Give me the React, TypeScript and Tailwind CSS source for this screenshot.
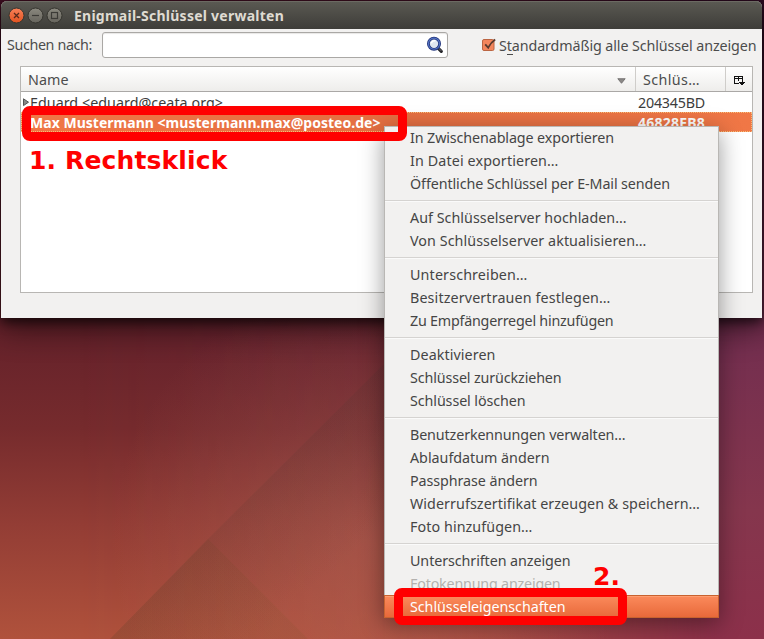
import { useLayoutEffect, useRef } from 'react';

// Single-line label whose tracking is adjusted so that it fills `width` pixels.
function Label({ text, width, className = '' }: { text: string; width: number; className?: string }) {
  const ref = useRef<HTMLSpanElement>(null);
  useLayoutEffect(() => {
    const el = ref.current;
    if (!el) return;
    el.style.letterSpacing = '0px';
    const natural = el.getBoundingClientRect().width;
    el.style.letterSpacing = `${(width - natural) / text.length}px`;
  }, [text, width]);
  return (
    <span ref={ref} className={`inline-block shrink-0 whitespace-pre ${className}`}>
      {text}
    </span>
  );
}

type Item = { text: string; width: number; state?: 'disabled' | 'active' };

const groups: Item[][] = [
  [
    { text: 'In Zwischenablage exportieren', width: 204 },
    { text: 'In Datei exportieren…', width: 148.5 },
    { text: 'Öffentliche Schlüssel per E-Mail senden', width: 260 },
  ],
  [
    { text: 'Auf Schlüsselserver hochladen…', width: 216.5 },
    { text: 'Von Schlüsselserver aktualisieren…', width: 236.5 },
  ],
  [
    { text: 'Unterschreiben…', width: 117.5 },
    { text: 'Besitzervertrauen festlegen…', width: 200.5 },
    { text: 'Zu Empfängerregel hinzufügen', width: 203.5 },
  ],
  [
    { text: 'Deaktivieren', width: 85.5 },
    { text: 'Schlüssel zurückziehen', width: 151.5 },
    { text: 'Schlüssel löschen', width: 115.5 },
  ],
  [
    { text: 'Benutzerkennungen verwalten…', width: 215.5 },
    { text: 'Ablaufdatum ändern', width: 139.5 },
    { text: 'Passphrase ändern', width: 127.5 },
    { text: 'Widerrufszertifikat erzeugen & speichern…', width: 290 },
    { text: 'Foto hinzufügen…', width: 122.5 },
  ],
  [
    { text: 'Unterschriften anzeigen', width: 160.5 },
    { text: 'Fotokennung anzeigen', width: 150.5, state: 'disabled' },
    { text: 'Schlüsseleigenschaften', width: 155.5, state: 'active' },
  ],
];

function MenuRow({ item }: { item: Item }) {
  const tone =
    item.state === 'active'
      ? 'border border-[#c8622f] bg-linear-to-b from-[#fb8a5b] to-[#e8693a] text-white shadow-[inset_0_1px_0_#ff9d70] -mx-px pl-[25px]'
      : item.state === 'disabled'
        ? 'pl-[25px] text-[#b3b1ae]'
        : 'pl-[25px] text-[#454545]';
  return (
    <div className={`flex h-[23px] items-center ${tone}`}>
      <Label text={item.text} width={item.width} />
    </div>
  );
}

function ContextMenu() {
  return (
    <div className="absolute left-[384px] top-[126px] w-[335px] border-x border-[#b9b7b4] bg-[#f2f1f0] shadow-[0_6px_22px_rgba(0,0,0,0.4)]">
      <div className="absolute inset-x-0 top-0 h-px bg-[#b9b7b4]" />
      {groups.map((items, i) => (
        <div key={i}>
          {i > 0 && (
            <div className="flex h-[11px] flex-col pt-[5px]">
              <div className="h-px bg-[#d5d3d1]" />
              <div className="h-px bg-[#fafafa]" />
            </div>
          )}
          {items.map((item) => (
            <MenuRow key={item.text} item={item} />
          ))}
        </div>
      ))}
    </div>
  );
}

function Wallpaper() {
  return (
    <svg className="absolute inset-0" width="764" height="639" viewBox="0 0 764 639">
      <defs>
        <linearGradient id="base" x1="0" y1="0" x2="0" y2="639" gradientUnits="userSpaceOnUse">
          <stop offset="0" stopColor="#3d0e20" />
          <stop offset="0.49" stopColor="#62202a" />
          <stop offset="0.67" stopColor="#762b2d" />
          <stop offset="0.82" stopColor="#933d35" />
          <stop offset="1" stopColor="#b0523c" />
        </linearGradient>
        <linearGradient id="violet" x1="0" y1="0" x2="0" y2="639" gradientUnits="userSpaceOnUse">
          <stop offset="0" stopColor="#2c0a20" />
          <stop offset="0.55" stopColor="#752f4f" />
          <stop offset="0.8" stopColor="#85364d" />
          <stop offset="1" stopColor="#8c304a" />
        </linearGradient>
        <linearGradient id="fade" x1="0" x2="764" y1="0" y2="0" gradientUnits="userSpaceOnUse">
          <stop offset="0.1" stopColor="#fff" stopOpacity="0" />
          <stop offset="0.5" stopColor="#fff" stopOpacity="0.15" />
          <stop offset="0.65" stopColor="#fff" stopOpacity="0.32" />
          <stop offset="0.94" stopColor="#fff" stopOpacity="1" />
        </linearGradient>
        <radialGradient id="glow" cx="370" cy="540" r="260" gradientUnits="userSpaceOnUse">
          <stop offset="0" stopColor="#d08c70" stopOpacity="0.26" />
          <stop offset="1" stopColor="#d08c70" stopOpacity="0" />
        </radialGradient>
        <linearGradient id="facet" x1="200" y1="520" x2="280" y2="610" gradientUnits="userSpaceOnUse">
          <stop offset="0" stopColor="#5a4020" stopOpacity="0.12" />
          <stop offset="1" stopColor="#6a5020" stopOpacity="0.1" />
        </linearGradient>
        <linearGradient id="slope" x1="290" y1="450" x2="370" y2="540" gradientUnits="userSpaceOnUse">
          <stop offset="0" stopColor="#40342c" stopOpacity="0.12" />
          <stop offset="1" stopColor="#40342c" stopOpacity="0" />
        </linearGradient>
        <mask id="side">
          <rect width="764" height="639" fill="url(#fade)" />
        </mask>
      </defs>
      <rect width="764" height="639" fill="url(#base)" />
      <rect width="764" height="639" fill="url(#violet)" mask="url(#side)" />
      <rect width="764" height="639" fill="url(#glow)" />
      <path d="M400 348 L208 539 L110 639 H500 V348Z" fill="url(#slope)" />
      <path d="M208 539 L110 639 H308Z" fill="url(#facet)" />
    </svg>
  );
}

function TitleBar() {
  return (
    <div className="flex h-7 items-center rounded-t-[6px] bg-linear-to-b from-[#5b5a53] to-[#3e3d39] pl-[7px] shadow-[inset_0_1px_0_#6b6a62]">
      <svg width="56" height="20" viewBox="0 0 56 20" className="shrink-0">
        <defs>
          <linearGradient id="close" x1="0" y1="0" x2="0" y2="1">
            <stop offset="0" stopColor="#f78159" />
            <stop offset="1" stopColor="#e2521f" />
          </linearGradient>
          <linearGradient id="ctl" x1="0" y1="0" x2="0" y2="1">
            <stop offset="0" stopColor="#8b897f" />
            <stop offset="1" stopColor="#66645d" />
          </linearGradient>
        </defs>
        <circle cx="8.5" cy="10.5" r="7.5" fill="url(#close)" stroke="#36352f" />
        <circle cx="27.5" cy="10.5" r="7.5" fill="url(#ctl)" stroke="#36352f" />
        <circle cx="46.5" cy="10.5" r="7.5" fill="url(#ctl)" stroke="#36352f" />
        <path d="M6 8l5 5m0-5l-5 5" stroke="#57291a" strokeWidth="1.3" fill="none" />
        <path d="M24 10.5h7" stroke="#3c3b37" strokeWidth="1.2" />
        <rect x="43.5" y="7.5" width="6" height="6" fill="none" stroke="#3c3b37" strokeWidth="1.2" />
      </svg>
      <Label text="Enigmail-Schlüssel verwalten" width={210} className="ml-[10px] mt-px text-[14px] font-bold text-[#dfdbd2]" />
    </div>
  );
}

function SearchIcon() {
  return (
    <svg width="18" height="18" viewBox="0 0 18 18">
      <path d="M12.3 12.3l3 3" stroke="#26262a" strokeWidth="3.2" strokeLinecap="round" />
      <path d="M12.6 12.2l2.4 2.4" stroke="#77777c" strokeWidth="0.9" strokeLinecap="round" />
      <circle cx="8" cy="7.7" r="5.6" fill="#dfe6ef" stroke="#22357c" strokeWidth="2.8" />
      <circle cx="8" cy="7.7" r="5.6" fill="none" stroke="#5474c4" strokeWidth="1.1" />
      <path d="M5.4 7.4a3 3 0 0 1 4-2.5" stroke="#fff" strokeWidth="1.6" fill="none" />
    </svg>
  );
}

function Toolbar() {
  return (
    <div className="flex h-[37px] items-start pl-[6px] pt-[3px] text-[#4c4c4c]">
      <div className="flex h-[26px] w-[95px] items-center">
        <Label text="Suchen nach:" width={85} />
      </div>
      <div className="flex h-[26px] w-[346px] items-center justify-end rounded-[3px] border border-[#aaa8a5] bg-white pr-[3px] shadow-[inset_0_1px_1px_#e8e7e6]">
        <SearchIcon />
      </div>
      <div className="ml-[33px] flex h-[26px] items-center pt-px">
        <svg width="18" height="16" viewBox="0 0 18 16" className="-mt-px shrink-0">
          <rect x="1.5" y="2.5" width="11.5" height="11" rx="1.5" fill="#f3855c" stroke="#bb6542" />
          <path d="M4.2 7.3l3 3.4C9 7 10.5 5 14.2 2.5" stroke="#5a3a2e" strokeWidth="1.8" fill="none" />
        </svg>
        <div className="relative flex">
          <Label text="Standardmäßig alle Schlüssel anzeigen" width={257.5} />
          <div className="absolute left-[8px] top-[18px] h-px w-[6px] bg-[#4c4c4c]" />
        </div>
      </div>
    </div>
  );
}

function KeyList() {
  return (
    <div className="ml-[19px] flex h-[227px] w-[733px] flex-col border border-[#b8b6b3] bg-white">
      <div className="flex h-[25px] border-b border-[#aaa8a6] bg-linear-to-b from-white to-[#eeedeb] text-[#4c4c4c]">
        <div className="flex w-[615px] items-center justify-between border-r border-[#cfcdca] pl-[7px] pr-[9px]">
          <Label text="Name" width={40.5} className="mt-[2px]" />
          <svg width="9" height="6" viewBox="0 0 9 6" className="mt-[3px]">
            <path d="M.8.7h7.4L4.5 5.3Z" fill="#8a8886" stroke="#686664" strokeWidth=".8" />
          </svg>
        </div>
        <div className="flex w-[90px] items-center border-r border-[#cfcdca] pl-[7px]">
          <Label text="Schlüs…" width={57} className="mt-[2px]" />
        </div>
        <div className="flex flex-1 items-center justify-center">
          <svg width="11" height="10" viewBox="0 0 11 10" className="mt-[3px]" fill="none" stroke="#111" shapeRendering="crispEdges">
            <path d="M5 7.5H.5V.5h8V5.500M.5 2.500h8M4.500.5v4" />
            <path d="M5 6h6L8 9.500Z" fill="#111" stroke="none" />
          </svg>
        </div>
      </div>
      <div className="flex h-5 items-center text-[#3c3c3c]">
        <svg width="9" height="9" viewBox="0 0 9 9" className="shrink-0">
          <path d="M2.5 .8L7.5 4.2L2.5 7.6Z" fill="#888" stroke="#555" />
        </svg>
        <div className="flex w-[608px]">
          <Label text="Eduard <eduard@ceata.org>" width={193} className="mt-[2px]" />
        </div>
        <Label text="204345BD" width={67} className="mt-[2px]" />
      </div>
      <div className="flex h-5 items-center border border-dotted border-[#f7bd78] bg-linear-to-r from-[#f07746] via-[#e46f42] to-[#f07746] text-[14px] font-bold text-white">
        <div className="flex w-[608px] pl-[8px]">
          <Label text="Max Mustermann <mustermann.max@posteo.de>" width={350.5} className="mt-px" />
        </div>
        <Label text="46828EB8" width={67} className="ml-[8px] mt-px" />
      </div>
    </div>
  );
}

export default function App() {
  return (
    <div className="relative h-[639px] w-[764px] overflow-hidden bg-[#3d0e20] font-['Noto_Sans',sans-serif] text-[14.3px] leading-5">
      <Wallpaper />
      <div className="relative ml-px mt-px h-[317px] w-[761px] rounded-t-[6px] bg-[#f2f1f0] shadow-[0_12px_30px_rgba(0,0,0,0.45),0_4px_12px_rgba(0,0,0,0.65)]">
        <TitleBar />
        <Toolbar />
        <KeyList />
      </div>
      <ContextMenu />
      <div className="absolute left-[22px] top-[106px] h-[35px] w-[385px] rounded-[8px] border-[9px] border-[#ff0000]" />
      <div className="absolute left-[394px] top-[588px] h-[37px] w-[233px] rounded-[8px] border-[9px] border-[#ff0000]" />
      <Label
        text="1. Rechtsklick"
        width={198.5}
        className="absolute left-[29px] top-[151px] font-['DejaVu_Sans',sans-serif] text-[25px] font-bold text-[#ff0000]"
      />
      <Label
        text="2."
        width={27}
        className="absolute left-[593px] top-[567px] font-['DejaVu_Sans',sans-serif] text-[25px] font-bold text-[#ff0000]"
      />
    </div>
  );
}
